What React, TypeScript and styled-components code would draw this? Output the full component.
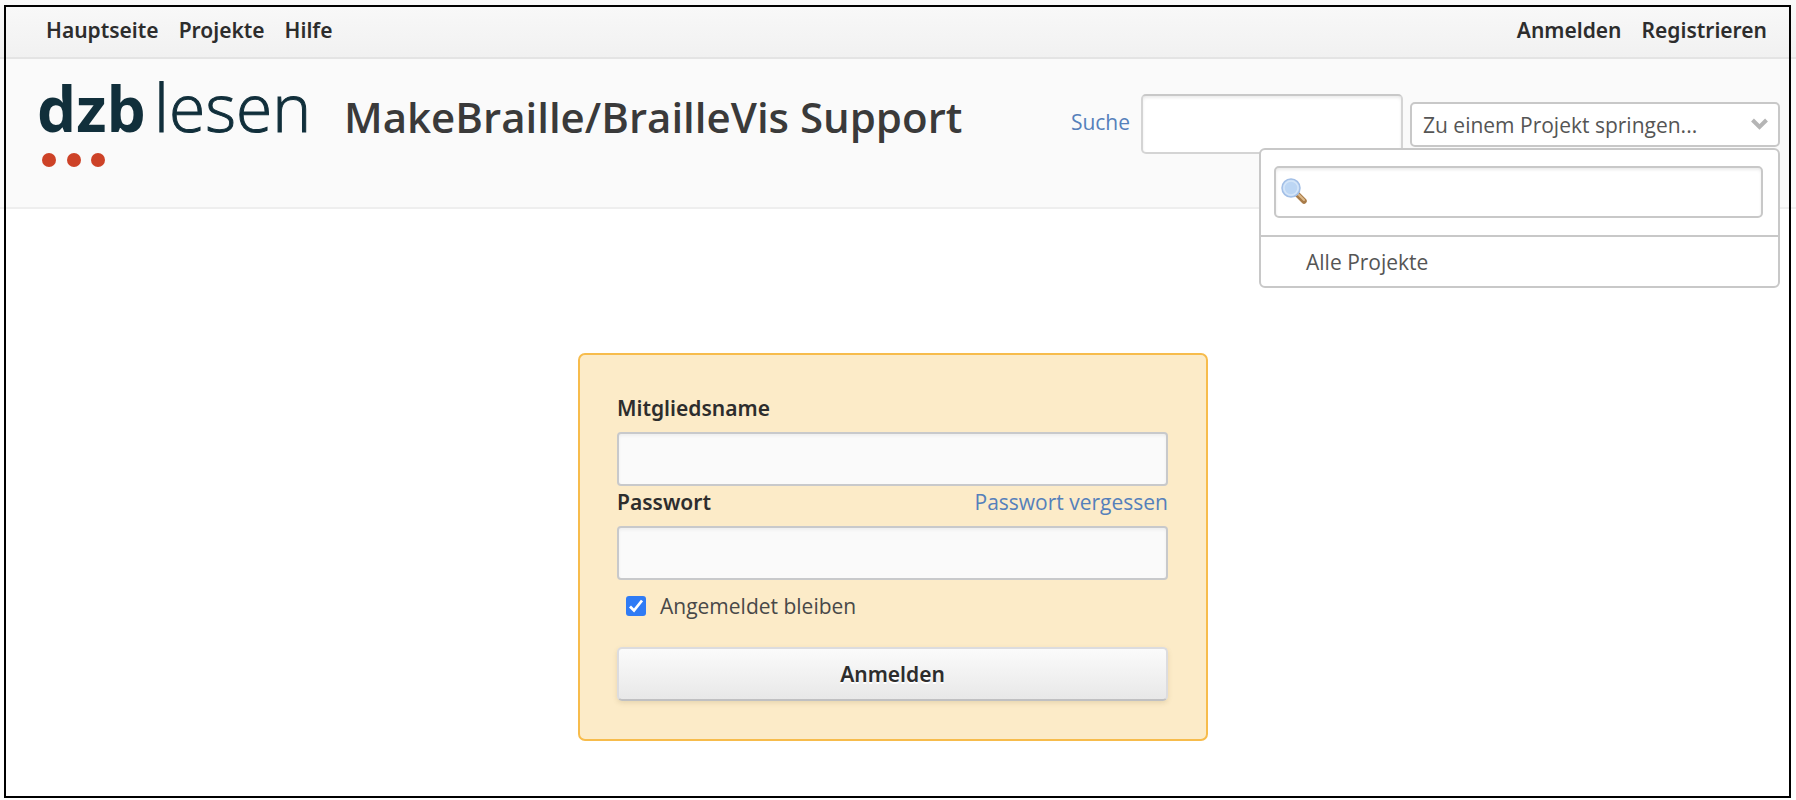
import React, { useState } from 'react';
import styled, { createGlobalStyle } from 'styled-components';

const GlobalStyle = createGlobalStyle`
  *, *::before, *::after { box-sizing: border-box; }
  body {
    margin: 0;
    background: #fff;
    color: #555;
    font: 400 21px/28px 'Open Sans', 'Noto Sans', sans-serif;
  }
  input, select, button { font: inherit; color: inherit; }
`;

const Page = styled.div`
  display: flex;
  flex-direction: column;
  min-height: 100vh;
`;

const Frame = styled.div`
  position: fixed;
  inset: 5px 5px 2px 4px;
  border: 2px solid #000;
  pointer-events: none;
  z-index: 10;
`;

const TopBar = styled.div`
  display: flex;
  justify-content: space-between;
  padding: 16px 29px 13px 46px;
  border-bottom: 2px solid #e4e4e4;
  background: linear-gradient(#f9f9f9, #f1f1f1);
`;

const Menu = styled.nav`
  display: flex;
  gap: 20px;
`;

const MenuLink = styled.a`
  color: #2d2d2d;
  font-family: 'Noto Sans', sans-serif;
  font-weight: 600;
  text-decoration: none;
`;

const Header = styled.header`
  display: flex;
  align-items: flex-start;
  justify-content: space-between;
  min-height: 150px;
  padding: 0 16px 0 36px;
  border-bottom: 2px solid #eee;
  background: #fafafa;
`;

const Brand = styled.div`
  display: flex;
  align-items: flex-start;
  gap: 28px;
`;

const Title = styled.h1`
  margin: 0;
  padding-top: 30px;
  color: #3a3a3a;
  font-size: 42px;
  font-weight: 600;
  line-height: 56px;
  white-space: nowrap;
`;

const QuickSearch = styled.form`
  display: flex;
  align-items: center;
  gap: 7px;
  padding-top: 35px;
`;

const SearchLabel = styled.label`
  display: flex;
  align-items: center;
  gap: 11px;
`;

const Link = styled.a`
  color: #5580bb;
  text-decoration: none;
`;

const SearchLink = styled(Link)`
  padding-bottom: 5px;
`;

const SearchInput = styled.input`
  width: 262px;
  height: 60px;
  border: 2px solid #d4d4d4;
  border-top-color: #c8c8c8;
  border-radius: 5px;
  background: #fff;
  box-shadow: inset 0 2px 3px #ececec;
`;

const Jump = styled.div`
  position: relative;
`;

const JumpSelect = styled.select`
  display: block;
  width: 370px;
  height: 45px;
  padding: 2px 40px 0 11px;
  border: 2px solid #c8c8c8;
  border-radius: 5px;
  background: #fff;
  appearance: none;
`;

const Chevron = styled.svg`
  position: absolute;
  top: 16px;
  right: 12px;
  pointer-events: none;
`;

const JumpPanel = styled.div`
  position: absolute;
  top: calc(100% + 1px);
  right: 0;
  width: 521px;
  border: 2px solid #c8c8c8;
  border-radius: 6px;
  background: #fff;
`;

const JumpSearch = styled.div`
  position: relative;
  padding: 16px 15px 17px 13px;
  border-bottom: 2px solid #c8c8c8;
`;

const JumpInput = styled.input`
  display: block;
  width: 100%;
  height: 52px;
  padding: 0 12px 0 36px;
  border: 2px solid #c8c8c8;
  border-radius: 5px;
  background: #fff;
  box-shadow: inset 0 2px 3px #ececec;
`;

const Magnifier = styled.svg`
  position: absolute;
  top: 27px;
  left: 19px;
  pointer-events: none;
`;

const JumpItem = styled.a`
  display: block;
  padding: 11px 45px 10px;
  color: #555;
  text-decoration: none;
`;

const Main = styled.main`
  display: flex;
  flex: 1;
  align-items: flex-start;
  justify-content: center;
  padding: 144px 10px 59px 0;
`;

const LoginBox = styled.form`
  display: flex;
  flex-direction: column;
  width: 630px;
  padding: 37px 38px 38px 37px;
  border: 2px solid #f7bc4c;
  border-radius: 7px;
  background: #fcebc8;
`;

const FieldHead = styled.div`
  display: flex;
  justify-content: space-between;
  padding-bottom: 8px;
  line-height: 32px;
`;

const FieldLabel = styled.label`
  color: #2d2d2d;
  font-family: 'Noto Sans', sans-serif;
  font-weight: 600;
`;

const Field = styled.input`
  width: 100%;
  height: 54px;
  padding: 0 10px;
  border: 2px solid #c8c9cb;
  border-radius: 4px;
  background: #fafafa;
  box-shadow: inset 0 2px 3px #eee;
`;

const StayRow = styled.label`
  display: flex;
  align-items: center;
  gap: 14px;
  padding: 12px 9px;
  color: #484848;
`;

const CheckBox = styled.input`
  width: 20px;
  height: 20px;
  margin: 0;
  border-radius: 3px;
  background: #2f7bf5 url("data:image/svg+xml,%3Csvg xmlns='http://www.w3.org/2000/svg' viewBox='0 0 20 20'%3E%3Cpath d='M4 10.5l4 4L16 4.5' fill='none' stroke='white' stroke-width='2.8'/%3E%3C/svg%3E");
  appearance: none;
  &:not(:checked) { border: 2px solid #888; background: #fff; }
`;

const Submit = styled.button`
  height: 54px;
  margin-top: 15px;
  border: 2px solid #dcdcdf;
  border-bottom-color: #c0c0c2;
  border-radius: 5px;
  background: linear-gradient(#fbfbfb, #e8e8e8);
  box-shadow: 0 2px 5px rgba(120, 100, 50, 0.16);
  color: #2d2d2d;
  font-family: 'Noto Sans', sans-serif;
  font-weight: 600;
  text-shadow: 0 2px 0 #fff;
`;

const LogoWord = styled.text<{ $bold?: boolean }>`
  fill: #112f3b;
  stroke: #112f3b;
  stroke-width: ${(p) => (p.$bold ? 0 : 1)}px;
  font-family: 'Open Sans', sans-serif;
  font-size: ${(p) => (p.$bold ? 62 : 66)}px;
  font-weight: ${(p) => (p.$bold ? 700 : 300)};
`;

const Logo = () => (
  <svg width="280" height="120" viewBox="0 0 280 120" role="img" aria-label="dzb lesen">
    <LogoWord $bold x="1" y="73">dzb</LogoWord>
    <LogoWord x="118" y="73">lesen</LogoWord>
    {[13, 38, 62].map((cx) => (
      <circle key={cx} cx={cx} cy="101" r="7" fill="#cd4227" />
    ))}
  </svg>
);

export default function App() {
  const [stay, setStay] = useState(true);
  return (
    <Page>
      <GlobalStyle />
      <Frame />
      <TopBar>
        <Menu>
          <MenuLink href="#home">Hauptseite</MenuLink>
          <MenuLink href="#projects">Projekte</MenuLink>
          <MenuLink href="#help">Hilfe</MenuLink>
        </Menu>
        <Menu>
          <MenuLink href="#login">Anmelden</MenuLink>
          <MenuLink href="#register">Registrieren</MenuLink>
        </Menu>
      </TopBar>
      <Header>
        <Brand>
          <Logo />
          <Title>MakeBraille/BrailleVis Support</Title>
        </Brand>
        <QuickSearch onSubmit={(e) => e.preventDefault()}>
          <SearchLabel>
            <SearchLink href="#search">Suche</SearchLink>
            <SearchInput type="text" aria-label="Suche" />
          </SearchLabel>
          <Jump>
            <JumpSelect aria-label="Projekt">
              <option>Zu einem Projekt springen...</option>
            </JumpSelect>
            <Chevron width="17" height="12" viewBox="0 0 17 12">
              <path d="M1.5 2l7 7 7-7" fill="none" stroke="#b5b5b5" strokeWidth="4" />
            </Chevron>
            <JumpPanel>
              <JumpSearch>
                <JumpInput type="text" aria-label="Projekt suchen" />
                <Magnifier width="28" height="28" viewBox="0 0 28 28">
                  <path d="M17 17l7 7" stroke="#a87b48" strokeWidth="5.5" strokeLinecap="round" />
                  <path d="M17.5 16.5l6.5 6.5" stroke="#dcb98a" strokeWidth="2" strokeLinecap="round" />
                  <circle cx="11" cy="11" r="9" fill="#c3dbf5" stroke="#a3bfe6" strokeWidth="1.5" />
                  <circle cx="11" cy="11" r="7" fill="#bcd6f4" stroke="#d4e5f8" strokeWidth="1.5" />
                </Magnifier>
              </JumpSearch>
              <JumpItem href="#all">Alle Projekte</JumpItem>
            </JumpPanel>
          </Jump>
        </QuickSearch>
      </Header>
      <Main>
        <LoginBox onSubmit={(e) => e.preventDefault()}>
          <FieldHead>
            <FieldLabel htmlFor="username">Mitgliedsname</FieldLabel>
          </FieldHead>
          <Field id="username" type="text" />
          <FieldHead>
            <FieldLabel htmlFor="password">Passwort</FieldLabel>
            <Link href="#lost">Passwort vergessen</Link>
          </FieldHead>
          <Field id="password" type="password" />
          <StayRow>
            <CheckBox type="checkbox" checked={stay} onChange={(e) => setStay(e.target.checked)} />
            Angemeldet bleiben
          </StayRow>
          <Submit type="submit">Anmelden</Submit>
        </LoginBox>
      </Main>
    </Page>
  );
}
